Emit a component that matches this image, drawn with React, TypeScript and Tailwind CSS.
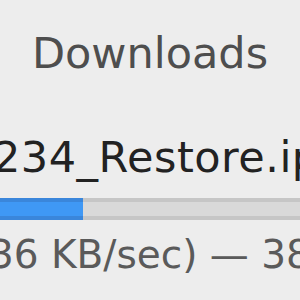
export default function App() {
  return (
    <div
      className="w-[300px] h-[300px] bg-[#ededed] overflow-hidden flex flex-col"
      style={{ fontFamily: '"DejaVu Sans", "Liberation Sans", sans-serif' }}
    >
      <div className="mt-[32px] h-[43px] text-[43px] leading-none text-[#4e4e4e] text-center whitespace-nowrap">
        Downloads
      </div>
      <div className="mt-[61px] h-[43px] text-[43px] leading-none tracking-[0.5px] text-[#222222] whitespace-nowrap ml-[-7px]">
        234_Restore.ipsw
      </div>
      <div className="mt-[19px] h-[22px] flex flex-col">
        <div className="h-[4px] flex">
          <div className="w-[83px] bg-[#3a86db]" />
          <div className="flex-1 bg-[#c6c6c6]" />
        </div>
        <div className="h-[14px] flex">
          <div className="w-[83px] bg-[#3f98f5]" />
          <div className="flex-1 bg-[#d9d9d9]" />
        </div>
        <div className="h-[4px] flex">
          <div className="w-[83px] bg-[#3a86db]" />
          <div className="flex-1 bg-[#c6c6c6]" />
        </div>
      </div>
      <div className="mt-[15px] h-[39px] text-[39px] leading-none text-[#5a5a5a] whitespace-nowrap ml-[-11px]">
        36 KB/sec) — 38.4 MB
      </div>
    </div>
  );
}
